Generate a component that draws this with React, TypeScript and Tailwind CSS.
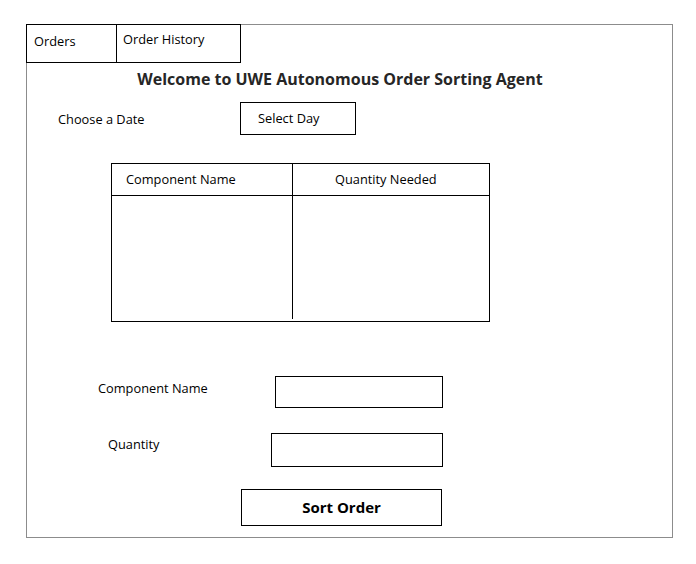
export default function App() {
  return (
    <div className="w-[696px] h-[564px] bg-white pt-[24px] pl-[26px] font-['Open_Sans',sans-serif] text-[12.8px] text-black">
      <div className="w-[647px] h-[514px] border border-[#8c8c8c]">
        {/* tabs */}
        <div className="flex -mt-px -ml-px">
          <div className="w-[91px] h-[39px] border border-black pl-[7px] pt-[7px] leading-[18px]">Orders</div>
          <div className="w-[125px] h-[39px] border border-black -ml-px pl-[6px] pt-[5px] leading-[18px]">Order History</div>
        </div>

        <h1 className="w-[626px] mt-[4px] text-center text-[16px] leading-[24px] font-bold text-[#262626]">
          Welcome to UWE Autonomous Order Sorting Agent
        </h1>

        <div className="flex items-center mt-[11px] ml-[31px]">
          <div className="w-[182px] leading-[18px]">Choose a Date</div>
          <div className="w-[116px] h-[33px] border border-black flex items-center pl-[17px]">Select Day</div>
        </div>

        {/* table */}
        <div className="ml-[84px] mt-[28px] w-[379px] h-[159px] border border-black flex flex-col">
          <div className="flex h-[32px] border-b border-black">
            <div className="w-[181px] border-r border-black pl-[14px] flex items-center">Component Name</div>
            <div className="flex-1 pl-[42px] flex items-center">Quantity Needed</div>
          </div>
          <div className="flex flex-1">
            <div className="w-[181px] border-r border-black mb-[2px]"></div>
            <div className="flex-1"></div>
          </div>
        </div>

        <div className="flex items-start mt-[54px] ml-[71px]">
          <div className="w-[177px] mt-[3px] leading-[18px]">Component Name</div>
          <input className="w-[168px] h-[32px] border border-black outline-none px-2" />
        </div>

        <div className="flex items-start mt-[25px] ml-[81px]">
          <div className="w-[163px] mt-[2px] leading-[18px]">Quantity</div>
          <input className="w-[172px] h-[34px] border border-black outline-none px-2" />
        </div>

        <button className="block ml-[214px] mt-[22px] w-[201px] h-[37px] border border-black text-[15px] font-bold">
          Sort Order
        </button>
      </div>
    </div>
  );
}
